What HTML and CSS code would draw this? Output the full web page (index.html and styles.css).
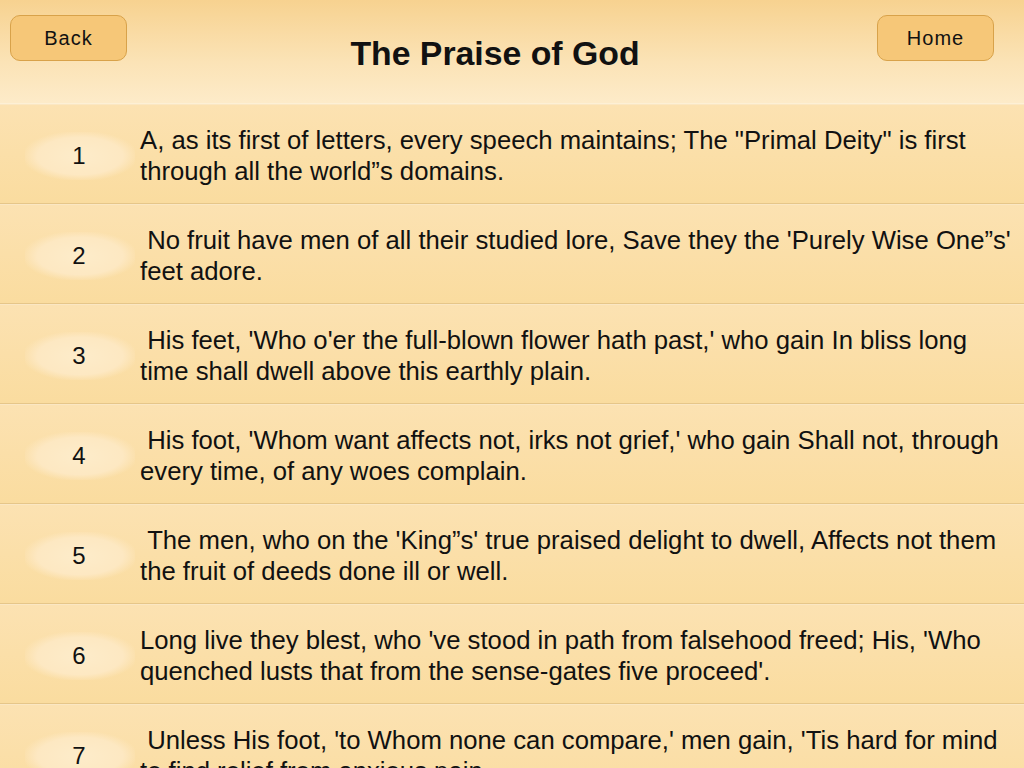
FILE: index.html
```html
<!DOCTYPE html>
<html>
<head>
<meta charset="utf-8">
<link rel="stylesheet" href="styles.css">
</head>
<body>
<div class="header">
  <button class="btn">Back</button>
  <h1 class="title">The Praise of God</h1>
  <button class="btn">Home</button>
</div>
<div class="list">
  <div class="row"><div class="num"><span>1</span></div><div class="text">A, as its first of letters, every speech maintains; The "Primal Deity" is first through all the world”s domains.</div></div>
  <div class="row"><div class="num"><span>2</span></div><div class="text">&nbsp;No fruit have men of all their studied lore, Save they the 'Purely Wise One”s' feet adore.</div></div>
  <div class="row"><div class="num"><span>3</span></div><div class="text">&nbsp;His feet, 'Who o'er the full-blown flower hath past,' who gain In bliss long time shall dwell above this earthly plain.</div></div>
  <div class="row"><div class="num"><span>4</span></div><div class="text">&nbsp;His foot, 'Whom want affects not, irks not grief,' who gain Shall not, through every time, of any woes complain.</div></div>
  <div class="row"><div class="num"><span>5</span></div><div class="text">&nbsp;The men, who on the 'King”s' true praised delight to dwell, Affects not them the fruit of deeds done ill or well.</div></div>
  <div class="row"><div class="num"><span>6</span></div><div class="text">Long live they blest, who 've stood in path from falsehood freed; His, 'Who quenched lusts that from the sense-gates five proceed'.</div></div>
  <div class="row"><div class="num"><span>7</span></div><div class="text">&nbsp;Unless His foot, 'to Whom none can compare,' men gain, 'Tis hard for mind to find relief from anxious pain.</div></div>
</div>
</body>
</html>
```
FILE: styles.css
```css
html, body {
  margin: 0;
  padding: 0;
  height: 768px;
  overflow: hidden;
  font-family: "Liberation Sans", Arial, sans-serif;
  color: #111;
  background: #fbe2b3;
}
.header {
  height: 104px;
  display: flex;
  justify-content: space-between;
  align-items: flex-start;
  padding: 15px 30px 0 10px;
  box-sizing: border-box;
  background: linear-gradient(to bottom, #f7d290 0%, #fbe3b6 60%, #fdebc9 100%);
  border-bottom: 1px solid #fdf0d6;
}
.btn {
  width: 117px;
  height: 46px;
  border: 1px solid #d8a24a;
  border-radius: 10px;
  background: #f6c778;
  font-family: "Liberation Sans", Arial, sans-serif;
  font-size: 20px;
  letter-spacing: 1px;
  color: #111;
  padding: 0 0 0 0;
}
.title {
  margin: 20px 14px 0 0;
  font-size: 33.8px;
  font-weight: bold;
  line-height: 36px;
}
.row {
  height: 100px;
  display: flex;
  align-items: center;
  box-sizing: border-box;
  background: linear-gradient(to bottom, #fce2b2 0%, #fadc9f 100%);
  border-bottom: 1px solid #e6c689;
  box-shadow: inset 0 1px 0 #fbe7c3;
}
.num {
  width: 140px;
  flex: none;
  display: flex;
  justify-content: center;
  align-items: center;
}
.num span {
  width: 110px;
  height: 48px;
  margin-left: 20px;
  margin-top: 4px;
  display: flex;
  justify-content: center;
  align-items: center;
  font-size: 24px;
  background: radial-gradient(ellipse at center, #fdecca 0%, #fde8c2 55%, rgba(253,232,194,0) 75%);
  border-radius: 20px;
  padding-right: 2px;
  box-sizing: border-box;
}
.text {
  flex: 1;
  font-size: 25.7px;
  line-height: 31px;
  padding-right: 2px;
  margin-top: 5px;
}
```
